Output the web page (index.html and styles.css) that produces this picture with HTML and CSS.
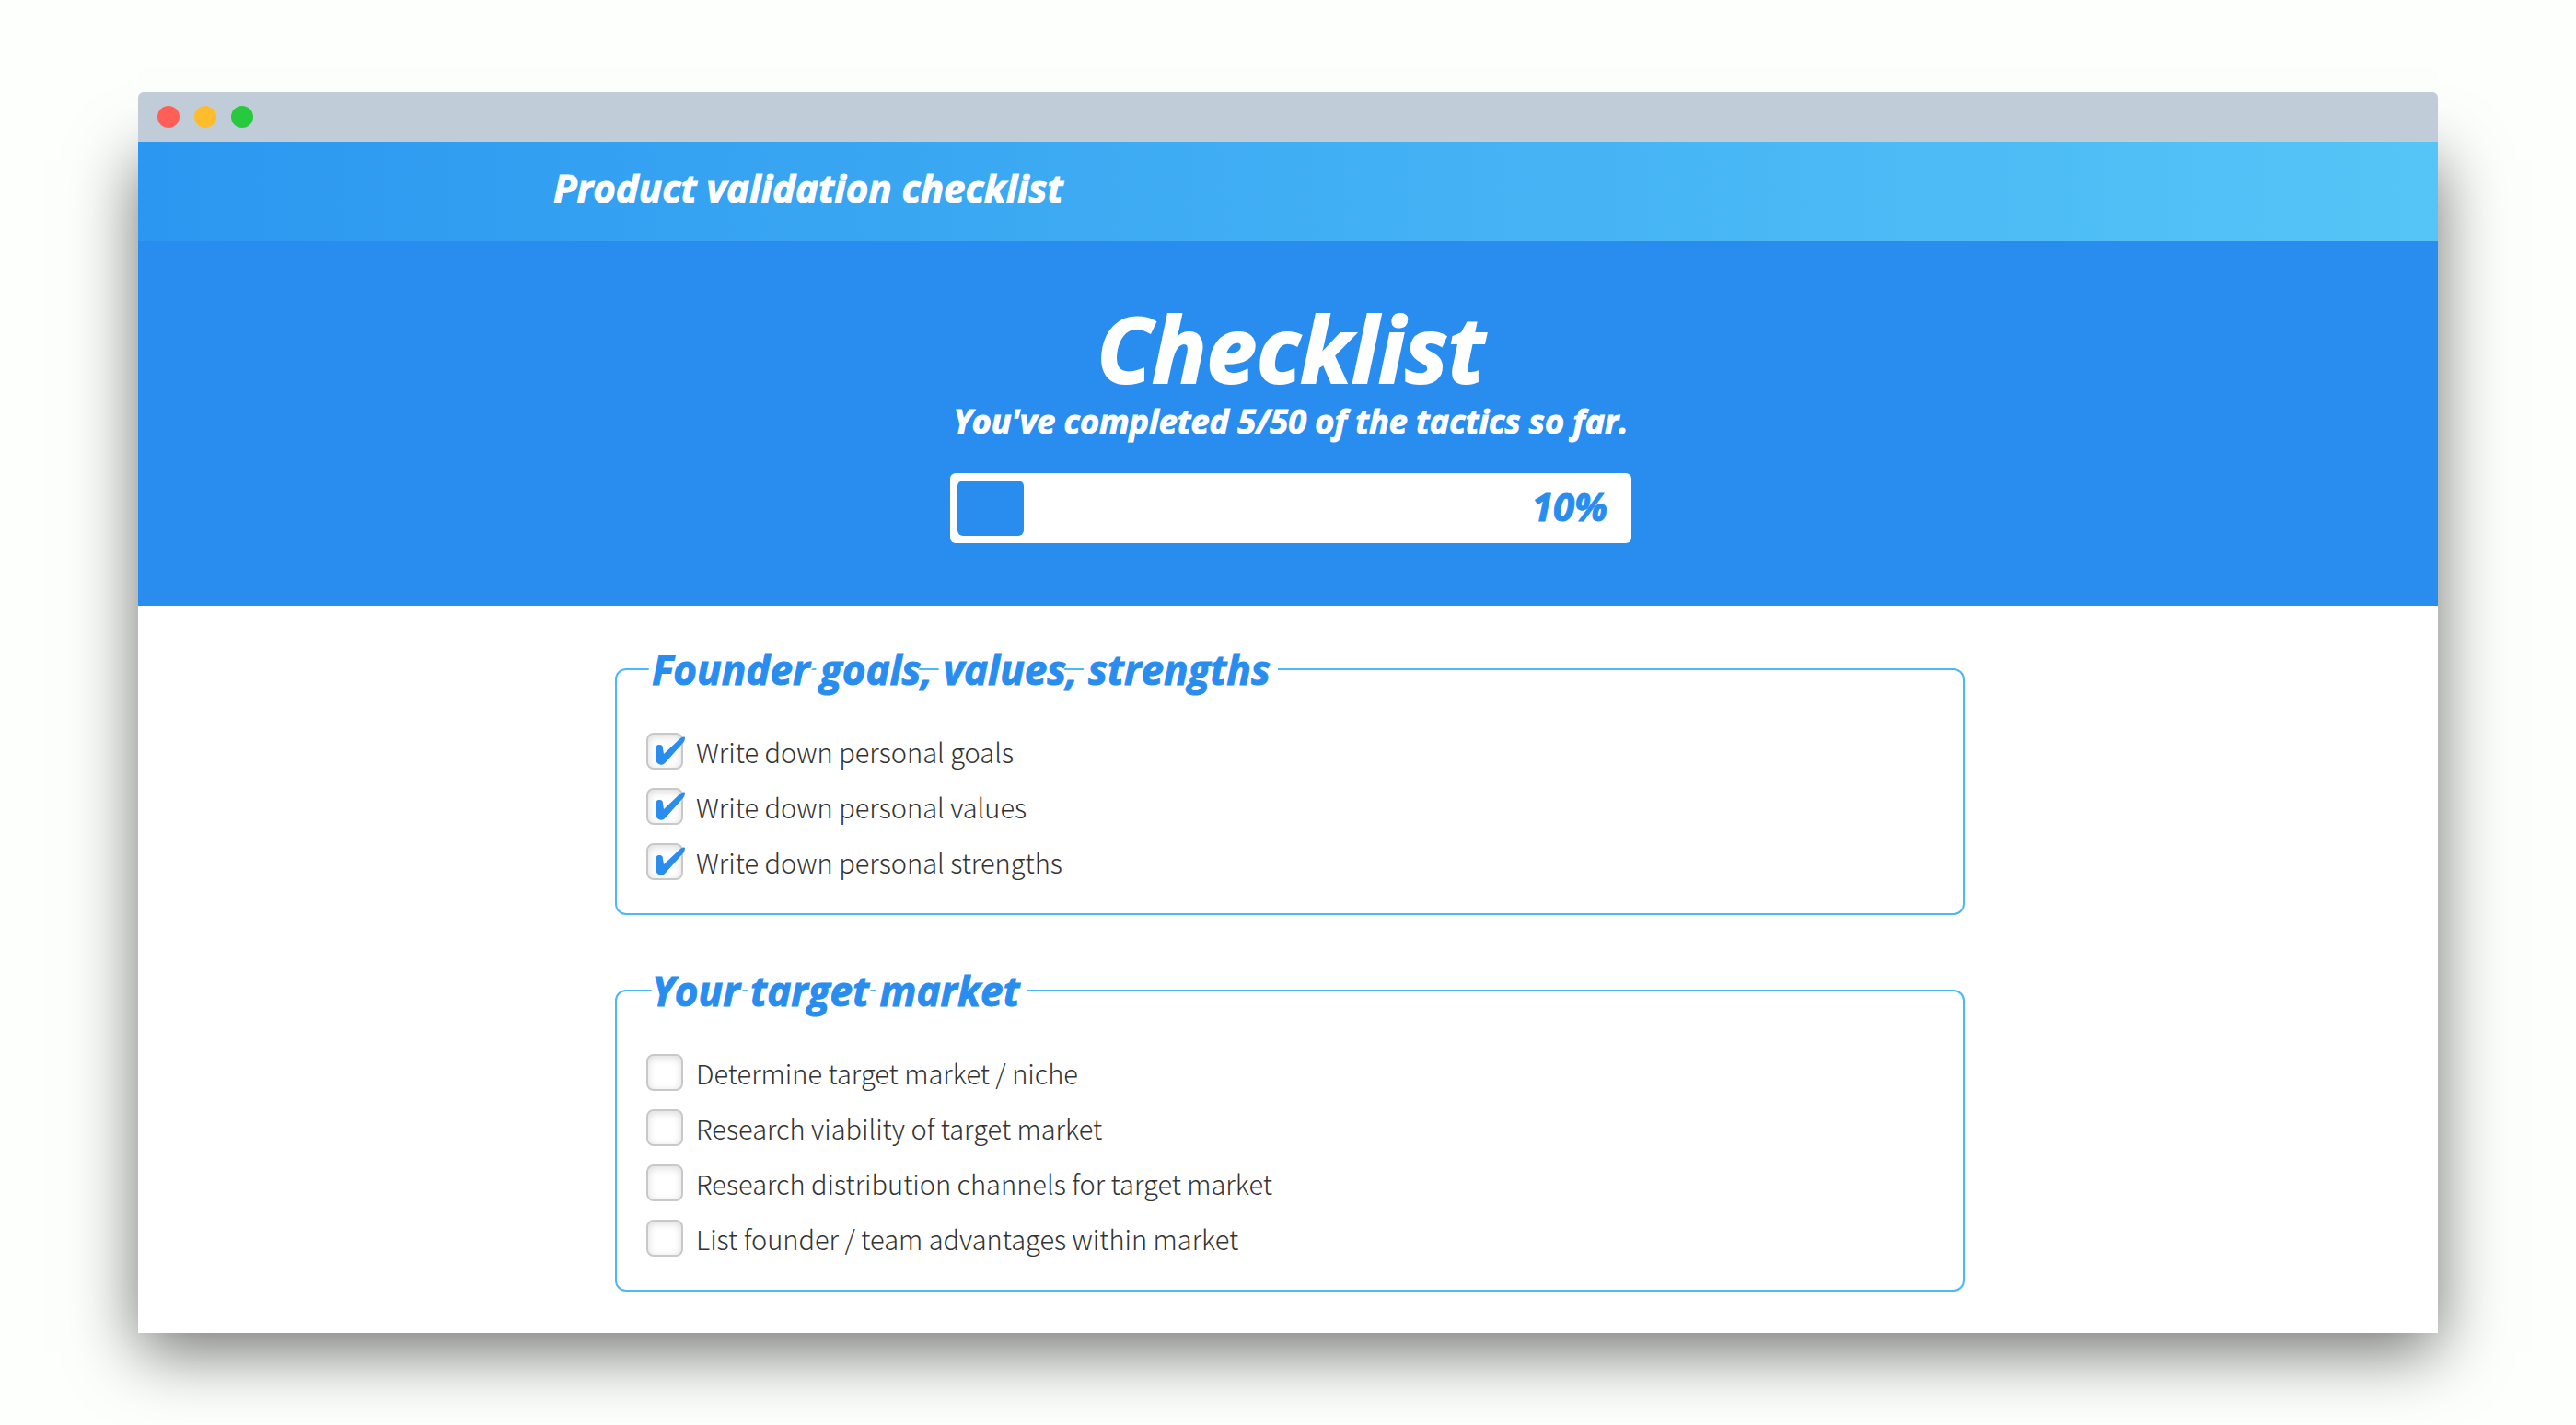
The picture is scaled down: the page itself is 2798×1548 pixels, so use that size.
FILE: index.html
```html
<!DOCTYPE html>
<html lang="en">
<head>
<meta charset="utf-8">
<meta name="viewport" content="width=device-width, initial-scale=1">
<title>Product validation checklist</title>
<link rel="stylesheet" href="styles.css">
</head>
<body>
<div class="titlebar">
  <span class="dot dot-close"></span>
  <span class="dot dot-minimize"></span>
  <span class="dot dot-zoom"></span>
</div>
<div class="window">
  <header class="header">
    <div class="header-inner">Product validation checklist</div>
  </header>
  <section class="hero">
    <h1 class="hero-title">Checklist</h1>
    <p class="hero-text">You've completed 5/50 of the tactics so far.</p>
    <div class="progress" role="progressbar" aria-label="Tactics completed" aria-valuenow="10" aria-valuemin="0" aria-valuemax="100">
      <div class="progress-track"><div class="progress-fill" style="width: 10%"></div></div>
      <span class="progress-value">10%</span>
    </div>
  </section>
  <main class="content">
    <form class="checklist">
      <fieldset class="group">
        <legend class="group-title">Founder goals, values, strengths</legend>
        <ul class="tasks">
          <li><label class="task"><input class="box" type="checkbox" checked>Write down personal goals</label></li>
          <li><label class="task"><input class="box" type="checkbox" checked>Write down personal values</label></li>
          <li><label class="task"><input class="box" type="checkbox" checked>Write down personal strengths</label></li>
        </ul>
      </fieldset>
      <fieldset class="group">
        <legend class="group-title">Your target market</legend>
        <ul class="tasks">
          <li><label class="task"><input class="box" type="checkbox">Determine target market / niche</label></li>
          <li><label class="task"><input class="box" type="checkbox">Research viability of target market</label></li>
          <li><label class="task"><input class="box" type="checkbox">Research distribution channels for target market</label></li>
          <li><label class="task"><input class="box" type="checkbox">List founder / team advantages within market</label></li>
        </ul>
      </fieldset>
    </form>
  </main>
</div>
</body>
</html>
```
FILE: styles.css
```css
:root {
  --blue: #298cef;
  --sky: #4bb9f3;
  --display: italic bold 42px/60px "Open Sans", "Noto Sans", sans-serif;
}

* {
  box-sizing: border-box;
}

body {
  margin: 0;
  padding: 100px 150px;
  background: #fdfffc;
  color: #333;
  font: 300 29px/40px "Noto Sans CJK JP", "Open Sans", sans-serif;
}

.window {
  background: #fff;
  box-shadow: 0 20px 68px rgba(0, 0, 0, 0.55);
}

/* Positioned so that it stays above the window's shadow. */
.titlebar {
  position: relative;
  display: flex;
  align-items: center;
  gap: 16px;
  height: 54px;
  padding: 0 21px;
  background: #c0cdd9;
  border-radius: 6px 6px 0 0;
}

.dot {
  width: 24px;
  height: 24px;
  border-radius: 50%;
}

.dot-close {
  background: #ff5f56;
}

.dot-minimize {
  background: #ffbd2e;
}

.dot-zoom {
  background: #27c93f;
}

.header,
.hero,
.group-title {
  -webkit-text-stroke: 1px currentColor;
}

.header {
  padding: 20px 0 28px 4px;
  background: linear-gradient(to right, #2c97f0, #55c5f7);
  color: #fff;
  font: var(--display);
}

.header-inner {
  max-width: 1600px;
  margin: 0 auto;
}

.hero {
  display: flex;
  flex-direction: column;
  align-items: center;
  padding: 66px 0 68px 6px;
  background: var(--blue);
  color: #fff;
  font: var(--display);
}

.hero-title {
  margin: 0;
  font-size: 98px;
  line-height: 100px;
  -webkit-text-stroke-width: 2px;
}

.hero-text {
  margin: 6px 0 32px;
  font-size: 36px;
  line-height: 48px;
}

.progress {
  display: grid;
  align-items: center;
  width: 100%;
  max-width: 740px;
  padding: 8px;
  background: #fff;
  border-radius: 6px;
  color: var(--blue);
}

.progress-track,
.progress-value {
  grid-area: 1 / 1;
}

.progress-fill {
  height: 60px;
  background: var(--blue);
  border-radius: 6px;
}

.progress-value {
  justify-self: end;
  padding: 0 18px 4px 0;
  line-height: 56px;
}

.content {
  padding: 68px 0 45px 4px;
}

.checklist {
  display: grid;
  gap: 81px;
  max-width: 1466px;
  margin: 0 auto;
}

.group {
  min-width: 0;
  margin: 0;
  padding: 0 32px 36px;
  border: 2px solid var(--sky);
  border-radius: 12px;
}

/* Floated so the border runs behind the title; the white shadow clears it around the letters. */
.group-title {
  float: left;
  margin-top: -31px;
  padding: 0 8px 0 6px;
  background: linear-gradient(#fff, #fff) right / 12px 100% no-repeat;
  color: var(--blue);
  font: var(--display);
  font-size: 44px;
  text-shadow: 3px 0 #fff, -3px 0 #fff, 6px 0 #fff, -6px 0 #fff, 8px 0 #fff, -8px 0 #fff, 0 2px #fff, 0 -2px #fff;
}

.tasks {
  display: grid;
  gap: 20px;
  clear: both;
  margin: 0;
  padding: 39px 0 0;
  list-style: none;
}

.task {
  display: flex;
  align-items: center;
  gap: 14px;
}

.box {
  flex: none;
  width: 40px;
  height: 40px;
  margin: 0;
  appearance: none;
  background: #fff;
  border: 2px solid #c8c8c8;
  border-radius: 8px;
  box-shadow: inset 0 2px 8px rgba(0, 0, 0, 0.15);
}

.box:checked::before {
  content: "";
  display: block;
  width: 34px;
  height: 32px;
  margin: 2px 0 0 7px;
  background: var(--blue);
  clip-path: path("M1 15C1 10 3 9 5 9C8 9 9 10 9 13L10 19L27 3C29 1 31 0 33 1C33 4 32 6 30 8L13 27C10 31 7 32 3 29C1 27 1 22 1 15Z");
}
```
